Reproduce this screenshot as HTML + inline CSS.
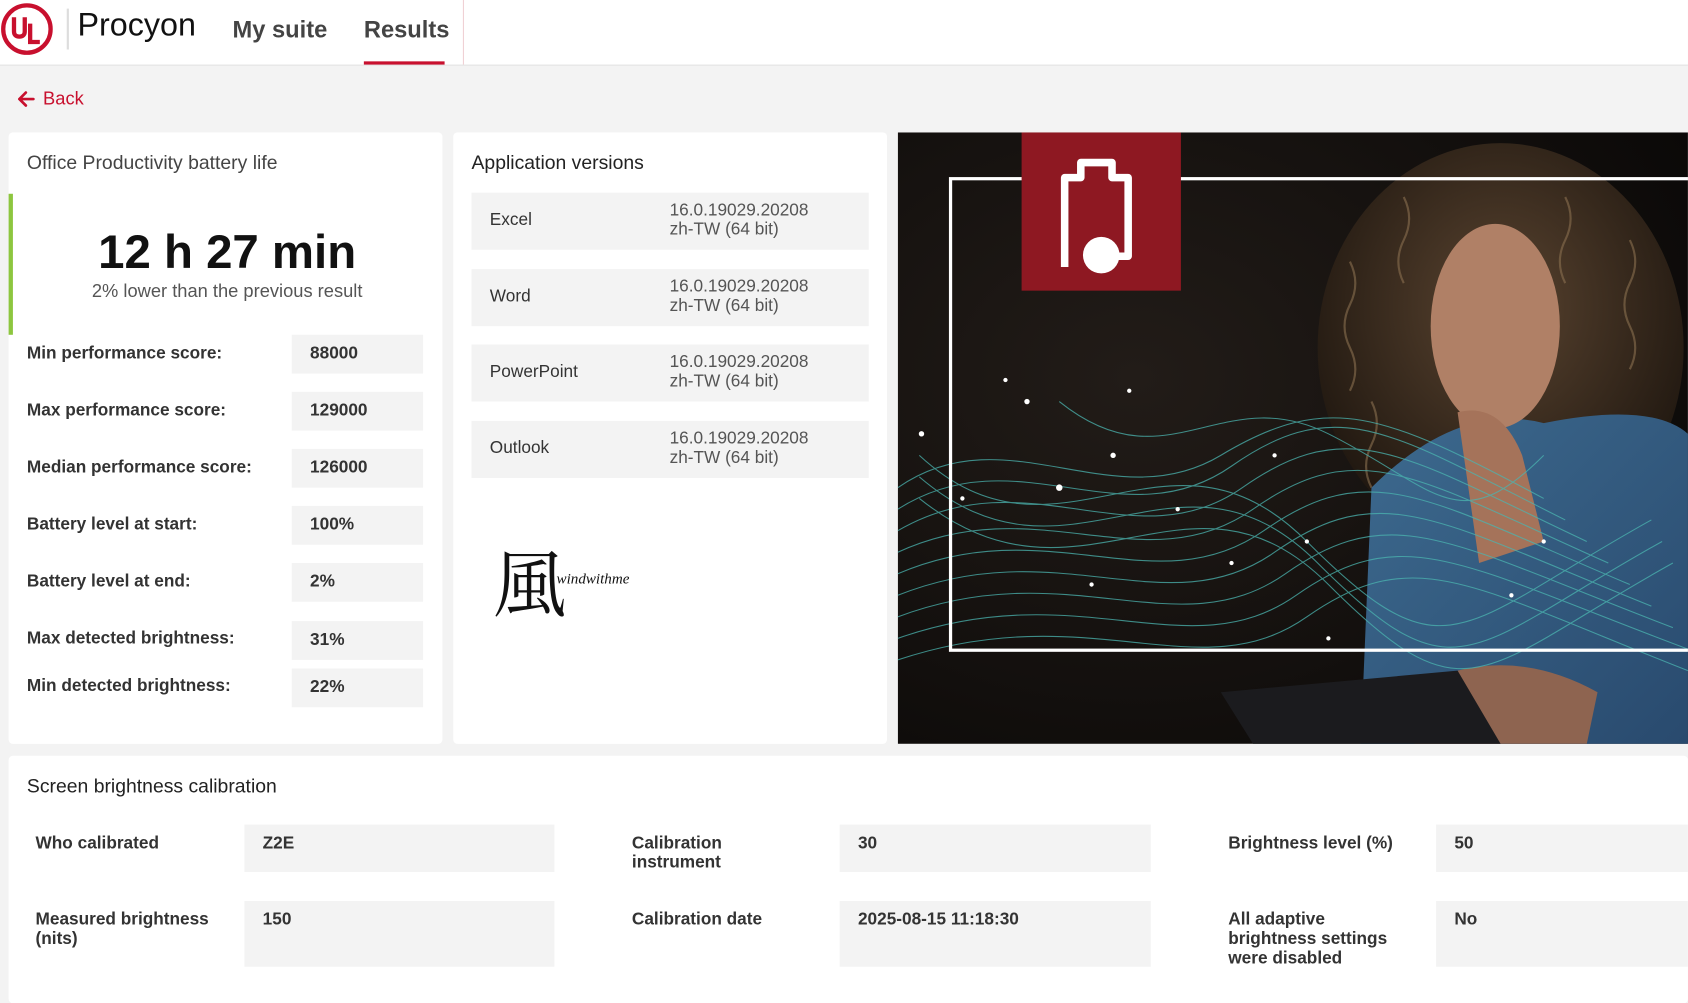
<!DOCTYPE html>
<html><head><meta charset="utf-8"><style>
html,body{margin:0;padding:0;width:1688px;height:985px;overflow:hidden;background:#f3f3f3;font-family:"Liberation Sans",sans-serif}
#w{position:absolute;left:0;top:0;width:1568px;height:915px;transform:scale(1.0765);transform-origin:0 0;background:#f3f3f3}
.a{position:absolute}
.hdr{left:0;top:0;width:1568px;height:60px;background:#fff;border-bottom:1px solid #e2e2e2}
.card{background:#fff;border-radius:4px}
.lbl{font-weight:bold;font-size:16px;color:#333}
.val{background:#f3f3f3;font-weight:bold;font-size:16px;color:#333;box-sizing:border-box;padding-left:17px}
.ar{background:#f3f3f3;font-size:16px;color:#333}
</style></head><body><div id="w">
<div class="a hdr"></div>
<svg class="a" style="left:0;top:2px" width="50" height="50" viewBox="0 0 50 50"><circle cx="25" cy="25" r="22" fill="none" stroke="#c8102e" stroke-width="4"/><path d="M13 14 L13 27 Q13 32 18 32 Q23 32 23 27 L23 14" fill="none" stroke="#c8102e" stroke-width="4"/><path d="M28 20 L28 37 L37 37" fill="none" stroke="#c8102e" stroke-width="4"/></svg>
<div class="a" style="left:62px;top:8px;width:2px;height:38px;background:#ddd"></div>
<div class="a" style="left:72px;top:7px;font-size:30px;color:#111">Procyon</div>
<div class="a" style="left:216px;top:15px;font-size:22px;font-weight:bold;color:#444">My suite</div>
<div class="a" style="left:338px;top:15px;font-size:22px;font-weight:bold;color:#444">Results</div>
<div class="a" style="left:338px;top:57px;width:75px;height:3px;background:#c8102e"></div>
<div class="a" style="left:430px;top:0;width:1px;height:60px;background:#f0d0d4"></div>
<svg class="a" style="left:15px;top:84px" width="18" height="16" viewBox="0 0 18 16"><path d="M16 8 L3 8 M9 2 L3 8 L9 14" fill="none" stroke="#c8102e" stroke-width="2.5" stroke-linecap="round" stroke-linejoin="round"/></svg>
<div class="a" style="left:40px;top:82px;font-size:17px;color:#c8102e">Back</div>

<div class="a card" style="left:8px;top:123px;width:403px;height:568px"></div>
<div class="a" style="left:25px;top:141px;font-size:18px;color:#444">Office Productivity battery life</div>
<div class="a" style="left:8px;top:180px;width:4px;height:131px;background:#8dc63f"></div>
<div class="a" style="left:8px;top:210px;width:406px;text-align:center;font-size:44px;font-weight:bold;color:#111">12 h 27 min</div>
<div class="a" style="left:8px;top:261px;width:406px;text-align:center;font-size:17px;color:#555">2% lower than the previous result</div>
<div class="a lbl" style="left:25px;top:320px">Min performance score:</div><div class="a val" style="left:271px;top:311px;width:122px;height:36px;line-height:36px">88000</div>
<div class="a lbl" style="left:25px;top:373px">Max performance score:</div><div class="a val" style="left:271px;top:364px;width:122px;height:36px;line-height:36px">129000</div>
<div class="a lbl" style="left:25px;top:426px">Median performance score:</div><div class="a val" style="left:271px;top:417px;width:122px;height:36px;line-height:36px">126000</div>
<div class="a lbl" style="left:25px;top:479px">Battery level at start:</div><div class="a val" style="left:271px;top:470px;width:122px;height:36px;line-height:36px">100%</div>
<div class="a lbl" style="left:25px;top:532px">Battery level at end:</div><div class="a val" style="left:271px;top:523px;width:122px;height:36px;line-height:36px">2%</div>
<div class="a lbl" style="left:25px;top:585px">Max detected brightness:</div><div class="a val" style="left:271px;top:577px;width:122px;height:36px;line-height:36px">31%</div>
<div class="a lbl" style="left:25px;top:629px">Min detected brightness:</div><div class="a val" style="left:271px;top:621px;width:122px;height:36px;line-height:36px">22%</div>

<div class="a card" style="left:421px;top:123px;width:403px;height:568px"></div>
<div class="a" style="left:438px;top:141px;font-size:18px;color:#222">Application versions</div>
<div class="a ar" style="left:438px;top:179px;width:369px;height:53px"><div class="a" style="left:17px;top:17px">Excel</div><div class="a" style="left:184px;top:8px;line-height:18px;color:#555">16.0.19029.20208<br>zh-TW (64 bit)</div></div>
<div class="a ar" style="left:438px;top:250px;width:369px;height:53px"><div class="a" style="left:17px;top:17px">Word</div><div class="a" style="left:184px;top:8px;line-height:18px;color:#555">16.0.19029.20208<br>zh-TW (64 bit)</div></div>
<div class="a ar" style="left:438px;top:320px;width:369px;height:53px"><div class="a" style="left:17px;top:17px">PowerPoint</div><div class="a" style="left:184px;top:8px;line-height:18px;color:#555">16.0.19029.20208<br>zh-TW (64 bit)</div></div>
<div class="a ar" style="left:438px;top:391px;width:369px;height:53px"><div class="a" style="left:17px;top:17px">Outlook</div><div class="a" style="left:184px;top:8px;line-height:18px;color:#555">16.0.19029.20208<br>zh-TW (64 bit)</div></div>
<div class="a" style="left:458px;top:490px;font-size:68px;color:#111;font-family:'Noto Serif CJK SC',serif">風</div>
<div class="a" style="left:517px;top:531px;font-size:14px;font-style:italic;color:#111;font-family:'Liberation Serif',serif">windwithme</div>

<svg class="a" style="left:834px;top:123px" width="734" height="568" viewBox="0 0 734 568">
<defs>
<radialGradient id="g1" cx="0.3" cy="0.4" r="0.8"><stop offset="0" stop-color="#221c18"/><stop offset="1" stop-color="#0b0908"/></radialGradient>
<radialGradient id="hair" cx="0.5" cy="0.4" r="0.6"><stop offset="0" stop-color="#5a4430"/><stop offset="1" stop-color="#1e160f"/></radialGradient>
<linearGradient id="sh" x1="0" y1="0" x2="1" y2="1"><stop offset="0" stop-color="#3d6a8f"/><stop offset="1" stop-color="#294a6e"/></linearGradient>
</defs>
<rect width="734" height="568" fill="url(#g1)"/>
<ellipse cx="560" cy="200" rx="170" ry="190" fill="url(#hair)"/>
<g fill="none" stroke="#8a7050" stroke-width="2" opacity="0.6"><path d="M420 120 q10 20 0 40 q-10 20 0 40 q10 20 0 40"/><path d="M440 250 q10 20 0 40 q-10 20 0 40"/><path d="M680 100 q10 20 0 40 q-10 20 0 40 q10 20 0 40"/><path d="M620 60 q10 20 0 40 q-10 20 0 40"/><path d="M470 60 q10 20 0 40 q-10 20 0 40"/></g>
<path d="M440 330 Q520 250 600 270 Q700 250 734 280 L734 568 L430 568 Z" fill="url(#sh)"/>
<ellipse cx="555" cy="180" rx="60" ry="95" fill="#b08066"/>
<path d="M520 260 Q560 250 580 300 L600 380 L540 400 Z" fill="#a5735a"/>
<path d="M470 520 Q560 470 650 520 L640 568 L480 568 Z" fill="#8e6450"/>
<path d="M300 520 L520 500 L560 568 L330 568 Z" fill="#1b1b1e"/>
<g fill="none" stroke="#4bb5b0" stroke-width="1" opacity="0.75">
<path d="M0 330 C100 260 200 360 300 300 S450 260 600 340"/>
<path d="M0 350 C110 280 210 380 310 310 S460 280 620 360"/>
<path d="M0 370 C120 300 220 400 320 330 S470 300 640 380"/>
<path d="M0 390 C130 330 230 420 330 350 S480 320 660 400"/>
<path d="M0 410 C140 350 240 440 340 370 S490 340 680 420"/>
<path d="M0 430 C150 370 250 460 350 390 S500 360 700 440"/>
<path d="M0 450 C160 390 260 480 360 410 S510 380 720 460"/>
<path d="M0 470 C170 410 270 500 370 430 S520 400 734 480"/>
<path d="M0 490 C180 430 280 520 380 450 S530 420 734 500"/>
<path d="M20 300 C150 420 250 250 380 380 S520 460 700 360"/>
<path d="M20 320 C160 440 260 270 390 400 S530 480 710 380"/>
<path d="M20 340 C170 460 270 290 400 420 S540 500 720 400"/>
<path d="M150 250 C250 330 300 230 400 280 S520 380 600 300"/>
</g>
<g fill="#fff"><circle cx="22" cy="280" r="2.5"/><circle cx="120" cy="250" r="2.5"/><circle cx="60" cy="340" r="2"/><circle cx="200" cy="300" r="2.5"/><circle cx="150" cy="330" r="3"/><circle cx="260" cy="350" r="2"/><circle cx="310" cy="400" r="2"/><circle cx="215" cy="240" r="2"/><circle cx="180" cy="420" r="2"/><circle cx="350" cy="300" r="2"/><circle cx="400" cy="470" r="2"/><circle cx="100" cy="230" r="2"/><circle cx="380" cy="380" r="2"/><circle cx="570" cy="430" r="2"/><circle cx="600" cy="380" r="2"/></g>
<rect x="49" y="43" width="700" height="438" fill="none" stroke="#fff" stroke-width="3"/>
<rect x="115" y="0" width="148" height="147" fill="#8e1822"/>
<path d="M155 125 L155 42 L170 42 L170 28 L199 28 L199 42 L214 42 L214 115 L196 115" fill="none" stroke="#fff" stroke-width="7" stroke-linejoin="round"/>
<circle cx="189" cy="114" r="17" fill="#fff"/>
</svg>

<div class="a card" style="left:8px;top:702px;width:1560px;height:230px"></div>
<div class="a" style="left:25px;top:720px;font-size:18px;color:#222">Screen brightness calibration</div>
<div class="a lbl" style="left:33px;top:775px">Who calibrated</div><div class="a val" style="left:227px;top:766px;width:288px;height:44px;padding-top:9px">Z2E</div>
<div class="a lbl" style="left:587px;top:775px;line-height:18px">Calibration<br>instrument</div><div class="a val" style="left:780px;top:766px;width:289px;height:44px;padding-top:9px">30</div>
<div class="a lbl" style="left:1141px;top:775px">Brightness level (%)</div><div class="a val" style="left:1334px;top:766px;width:234px;height:44px;padding-top:9px">50</div>
<div class="a lbl" style="left:33px;top:846px;line-height:18px">Measured brightness<br>(nits)</div><div class="a val" style="left:227px;top:837px;width:288px;height:61px;padding-top:9px">150</div>
<div class="a lbl" style="left:587px;top:846px">Calibration date</div><div class="a val" style="left:780px;top:837px;width:289px;height:61px;padding-top:9px">2025-08-15 11:18:30</div>
<div class="a lbl" style="left:1141px;top:846px;line-height:18px">All adaptive<br>brightness settings<br>were disabled</div><div class="a val" style="left:1334px;top:837px;width:234px;height:61px;padding-top:9px">No</div>
</div></body></html>
